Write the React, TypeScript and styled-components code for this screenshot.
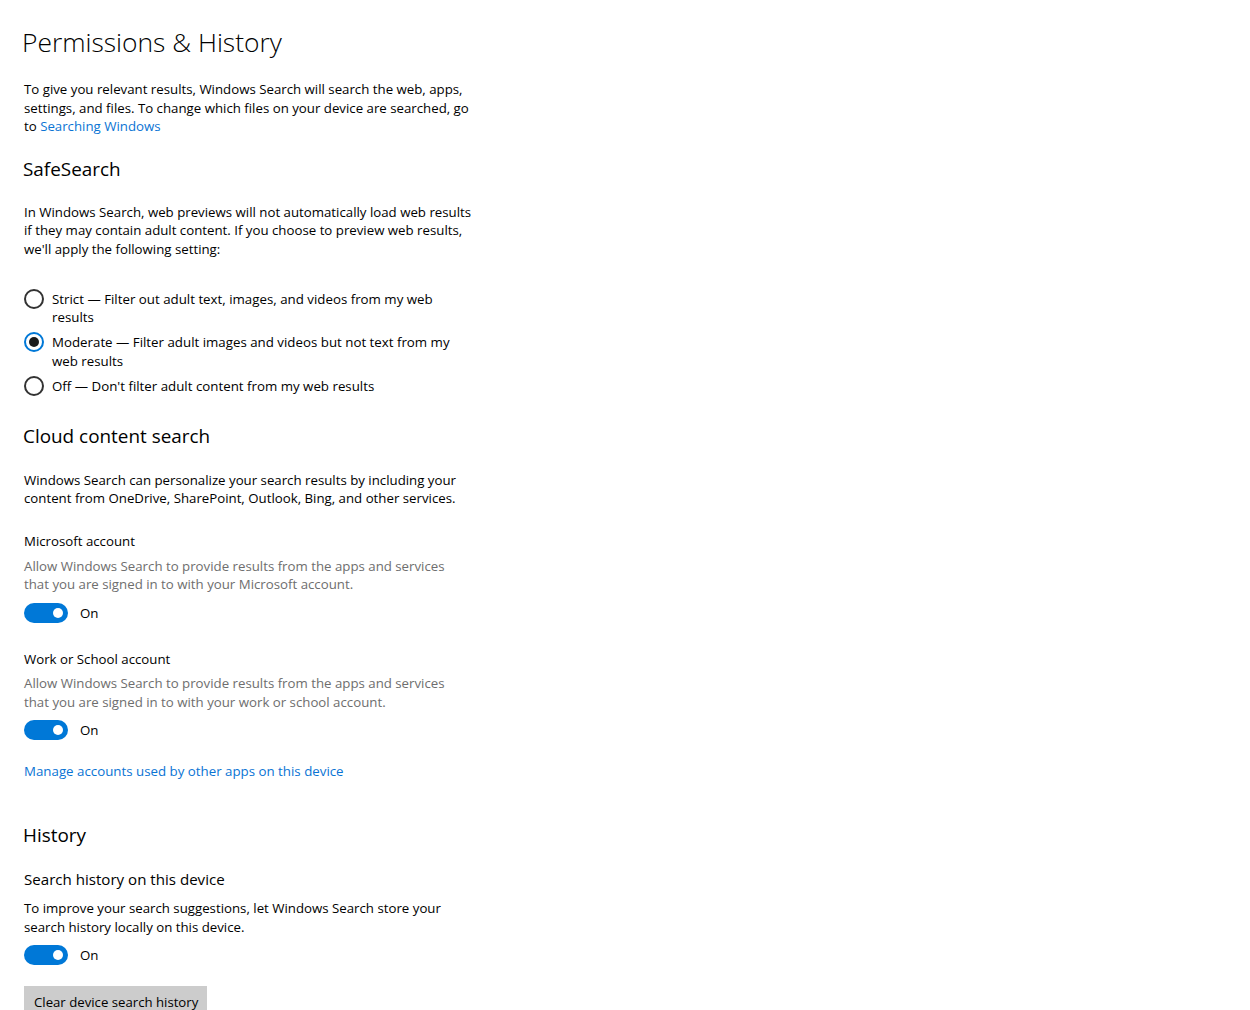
import React from "react";
import styled, { createGlobalStyle } from "styled-components";

const Global = createGlobalStyle`
  html, body { margin: 0; padding: 0; background: #ffffff; }
  body { font-family: "Open Sans", "Noto Sans", sans-serif; color: #000; }
`;

const Page = styled.main`
  display: flex;
  flex-direction: column;
  align-items: flex-start;
  padding: 22px 0 0 24px;
  width: 470px;
`;

const Title = styled.h1`
  margin: 0 0 0 -2px;
  font-size: 26.4px;
  font-weight: 300;
  line-height: 40px;
  white-space: nowrap;
`;

const Heading = styled.h2<{ $top: number }>`
  margin: ${(p) => p.$top}px 0 0 -1px;
  font-size: 18.9px;
  font-weight: 400;
  line-height: 28px;
  white-space: nowrap;
`;

const SubHeading = styled.h3<{ $top: number }>`
  margin: ${(p) => p.$top}px 0 0 0;
  font-size: 15.1px;
  font-weight: 400;
  line-height: 22px;
  white-space: nowrap;
`;

const Para = styled.p<{ $top: number; $muted?: boolean }>`
  margin: ${(p) => p.$top}px 0 0 0;
  font-size: 13.25px;
  line-height: 18.6px;
  white-space: nowrap;
  color: ${(p) => (p.$muted ? "#6e6e6e" : "#000")};
`;

const Label = styled.div<{ $top: number }>`
  margin-top: ${(p) => p.$top}px;
  font-size: 13.25px;
  line-height: 18.6px;
  white-space: nowrap;
`;

const Link = styled.a`
  color: #0a74d4;
  text-decoration: none;
  cursor: pointer;
`;

const LinkRow = styled.div<{ $top: number }>`
  margin-top: ${(p) => p.$top}px;
  font-size: 13.3px;
  line-height: 18.6px;
  white-space: nowrap;
`;

const RadioGroup = styled.div`
  display: flex;
  flex-direction: column;
  gap: 6.4px;
  margin-top: 31px;
`;

const RadioRow = styled.label`
  display: flex;
  align-items: flex-start;
  gap: 8px;
  font-size: 13.3px;
  line-height: 18.6px;
  cursor: pointer;
`;

const RadioCircle = styled.span<{ $checked?: boolean }>`
  flex: none;
  box-sizing: border-box;
  width: 20px;
  height: 20px;
  margin-top: -1px;
  border-radius: 50%;
  border: 2px solid ${(p) => (p.$checked ? "#0078d7" : "#333")};
  display: flex;
  align-items: center;
  justify-content: center;
  &::after {
    content: "";
    display: ${(p) => (p.$checked ? "block" : "none")};
    width: 10px;
    height: 10px;
    border-radius: 50%;
    background: #1a1a1a;
  }
`;

const ToggleRow = styled.div<{ $top: number }>`
  display: flex;
  align-items: center;
  gap: 12px;
  margin-top: ${(p) => p.$top}px;
  font-size: 13.3px;
  height: 20px;
`;

const Track = styled.span<{ $on?: boolean }>`
  box-sizing: border-box;
  width: 44px;
  height: 20px;
  border-radius: 10px;
  background: ${(p) => (p.$on ? "#0078d7" : "transparent")};
  border: ${(p) => (p.$on ? "none" : "2px solid #333")};
  display: flex;
  align-items: center;
  justify-content: ${(p) => (p.$on ? "flex-end" : "flex-start")};
  padding: 0 5px;
  &::after {
    content: "";
    width: 10px;
    height: 10px;
    border-radius: 50%;
    background: ${(p) => (p.$on ? "#fff" : "#333")};
  }
`;

const Button = styled.button`
  margin-top: 21px;
  height: 32px;
  padding: 0 9px 0 10px;
  border: none;
  background: #cccccc;
  font-family: inherit;
  font-size: 13.2px;
  color: #000;
  cursor: pointer;
`;

const Toggle = ({ on }: { on: boolean }) => <Track $on={on} />;

export default function App() {
  return (
    <>
      <Global />
      <Page>
        <Title>Permissions &amp; History</Title>
        <Para $top={18}>
          To give you relevant results, Windows Search will search the web, apps,
          <br />
          settings, and files. To change which files on your device are searched, go
          <br />
          to <Link>Searching Windows</Link>
        </Para>

        <Heading $top={19}>SafeSearch</Heading>
        <Para $top={20}>
          In Windows Search, web previews will not automatically load web results
          <br />
          if they may contain adult content. If you choose to preview web results,
          <br />
          we'll apply the following setting:
        </Para>

        <RadioGroup>
          <RadioRow>
            <RadioCircle />
            <span>
              Strict — Filter out adult text, images, and videos from my web
              <br />
              results
            </span>
          </RadioRow>
          <RadioRow>
            <RadioCircle $checked />
            <span>
              Moderate — Filter adult images and videos but not text from my
              <br />
              web results
            </span>
          </RadioRow>
          <RadioRow>
            <RadioCircle />
            <span>Off — Don't filter adult content from my web results</span>
          </RadioRow>
        </RadioGroup>

        <Heading $top={26}>Cloud content search</Heading>
        <Para $top={21}>
          Windows Search can personalize your search results by including your
          <br />
          content from OneDrive, SharePoint, Outlook, Bing, and other services.
        </Para>

        <Label $top={24}>Microsoft account</Label>
        <Para $top={6} $muted>
          Allow Windows Search to provide results from the apps and services
          <br />
          that you are signed in to with your Microsoft account.
        </Para>
        <ToggleRow $top={9}>
          <Toggle on />
          <span>On</span>
        </ToggleRow>

        <Label $top={27}>Work or School account</Label>
        <Para $top={6} $muted>
          Allow Windows Search to provide results from the apps and services
          <br />
          that you are signed in to with your work or school account.
        </Para>
        <ToggleRow $top={9}>
          <Toggle on />
          <span>On</span>
        </ToggleRow>

        <LinkRow $top={22}>
          <Link>Manage accounts used by other apps on this device</Link>
        </LinkRow>

        <Heading $top={40}>History</Heading>
        <SubHeading $top={19}>Search history on this device</SubHeading>
        <Para $top={9}>
          To improve your search suggestions, let Windows Search store your
          <br />
          search history locally on this device.
        </Para>
        <ToggleRow $top={9}>
          <Toggle on />
          <span>On</span>
        </ToggleRow>
        <Button>Clear device search history</Button>
      </Page>
    </>
  );
}
